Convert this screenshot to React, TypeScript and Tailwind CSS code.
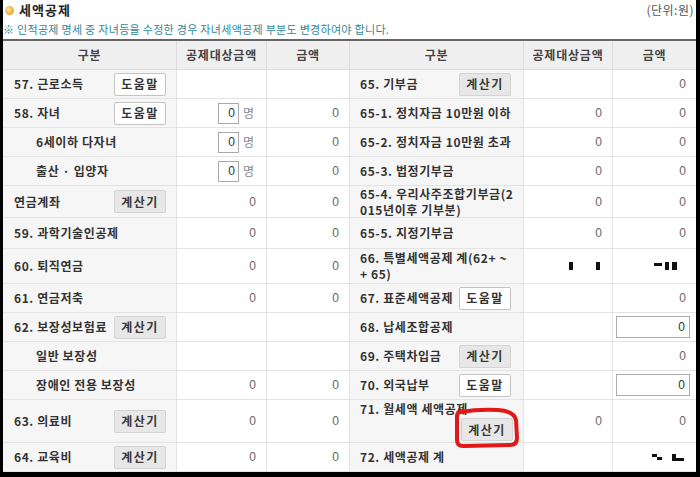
import React from 'react';

type BtnKind = 'help' | 'calc';

function Btn({ kind }: { kind: BtnKind }) {
  const help = kind === 'help';
  return (
    <span
      className={`inline-flex shrink-0 items-center justify-center w-[52px] h-[23px] rounded-[2px] border text-[12px] font-bold tracking-[1.5px] ${
        help ? 'bg-white border-[#c3c3c3] text-[#333]' : 'bg-[#e7e7e7] border-[#d4d4d4] text-[#3a3a3a]'
      }`}
    >
      {help ? '도움말' : '계산기'}
    </span>
  );
}

function L({
  children,
  btn,
  side = 'l',
  indent = false,
}: {
  children: React.ReactNode;
  btn?: BtnKind;
  side?: 'l' | 'r';
  indent?: boolean;
}) {
  const pad = side === 'l' ? (indent ? 'pl-[33px] pr-[10px]' : 'pl-[11px] pr-[10px]') : 'pl-[10px] pr-[12px]';
  return (
    <div
      className={`flex items-center justify-between border-b border-r border-[#e3e3e3] bg-[#f6f6f6] text-[12px] font-bold text-[#333] leading-[16px] tracking-[0.6px] ${pad}`}
    >
      <span className="whitespace-nowrap">{children}</span>
      {btn && <Btn kind={btn} />}
    </div>
  );
}

function V({ children, last = false }: { children?: React.ReactNode; last?: boolean }) {
  return (
    <div
      className={`flex items-center justify-end border-b border-[#e3e3e3] bg-white text-[12px] text-[#666] font-['Liberation_Sans',sans-serif] ${
        last ? '' : 'border-r'
      }`}
    >
      {children}
    </div>
  );
}

function Zero() {
  return <span className="pr-[10px]">0</span>;
}

function Count() {
  return (
    <div className="flex items-center gap-[4px] pr-[12px]">
      <span className="flex w-[21px] h-[21px] items-center justify-end border border-[#a9a9a9] bg-white pr-[3px] text-[12px] text-[#333]">
        0
      </span>
      <span className="text-[12px] text-[#888] font-['Noto_Sans_CJK_KR',sans-serif]">명</span>
    </div>
  );
}

function BoxInput() {
  return (
    <div className="pr-[6px]">
      <span className="flex w-[74px] h-[22px] items-center justify-end border border-[#ababab] bg-white pr-[4px] text-[12px] text-[#333]">
        0
      </span>
    </div>
  );
}

function H({ children, last = false }: { children: React.ReactNode; last?: boolean }) {
  return (
    <div
      className={`flex items-center justify-center border-b border-[#dcdcdc] bg-[#efefef] text-[12px] font-bold text-[#444] tracking-[0.8px] ${
        last ? '' : 'border-r'
      }`}
    >
      {children}
    </div>
  );
}

export default function App() {
  return (
    <div className="w-[700px] h-[477px] overflow-hidden bg-white border-l-[3px] border-r-[4px] border-b-[5px] border-black font-['Noto_Sans_CJK_KR','Noto_Sans',sans-serif]">
      <div className="flex h-[20px] items-center justify-between pl-[2px] pr-[2px]">
        <div className="flex items-center gap-[5px]">
          <span className="w-[9px] h-[9px] rounded-full bg-[radial-gradient(circle_at_40%_40%,#fde6a8_0%,#f2b13f_55%,#d98a1c_100%)]" />
          <span className="text-[13px] font-bold text-[#222] tracking-[1px]">세액공제</span>
        </div>
        <span className="text-[12px] text-[#555] tracking-[0.5px]">(단위:원)</span>
      </div>
      <div className="flex h-[19px] items-center whitespace-nowrap text-[11px] text-[#2f8796] tracking-[0.3px]">
        ※ 인적공제 명세 중 자녀등을 수정한 경우 자녀세액공제 부분도 변경하여야 합니다.
      </div>
      <div className="grid grid-cols-[174px_90px_83px_174px_89px_83px] grid-rows-[29px_29px_29px_29px_29px_32px_31px_35px_29px_29px_29px_29px_43px_29px] border-t-2 border-[#666]">
        <H>구분</H>
        <H>공제대상금액</H>
        <H>금액</H>
        <H>구분</H>
        <H>공제대상금액</H>
        <H last>금액</H>

        <L btn="help">57. 근로소득</L>
        <V />
        <V />
        <L side="r" btn="calc">65. 기부금</L>
        <V />
        <V last><Zero /></V>

        <L btn="help">58. 자녀</L>
        <V><Count /></V>
        <V><Zero /></V>
        <L side="r">65-1. 정치자금 10만원 이하</L>
        <V><Zero /></V>
        <V last><Zero /></V>

        <L indent>6세이하 다자녀</L>
        <V><Count /></V>
        <V><Zero /></V>
        <L side="r">65-2. 정치자금 10만원 초과</L>
        <V><Zero /></V>
        <V last><Zero /></V>

        <L indent>출산 · 입양자</L>
        <V><Count /></V>
        <V><Zero /></V>
        <L side="r">65-3. 법정기부금</L>
        <V><Zero /></V>
        <V last><Zero /></V>

        <L btn="calc">연금계좌</L>
        <V><Zero /></V>
        <V><Zero /></V>
        <L side="r">
          65-4. 우리사주조합기부금(2
          <br />
          015년이후 기부분)
        </L>
        <V><Zero /></V>
        <V last><Zero /></V>

        <L>59. 과학기술인공제</L>
        <V><Zero /></V>
        <V><Zero /></V>
        <L side="r">65-5. 지정기부금</L>
        <V><Zero /></V>
        <V last><Zero /></V>

        <L>60. 퇴직연금</L>
        <V><Zero /></V>
        <V><Zero /></V>
        <L side="r">
          66. 특별세액공제 계(62+ ~
          <br />+ 65)
        </L>
        <V>
          <div className="flex items-center gap-[23px] pr-[12px]">
            <span className="w-[4px] h-[8px] bg-[#111]" />
            <span className="w-[4px] h-[8px] bg-[#111]" />
          </div>
        </V>
        <V last>
          <div className="flex items-start gap-[3px] pr-[19px]">
            <span className="mt-[1px] w-[8px] h-[3px] bg-[#111]" />
            <span className="w-[4px] h-[8px] bg-[#111]" />
            <span className="w-[5px] h-[8px] bg-[#111]" />
          </div>
        </V>

        <L>61. 연금저축</L>
        <V><Zero /></V>
        <V><Zero /></V>
        <L side="r" btn="help">67. 표준세액공제</L>
        <V />
        <V last><Zero /></V>

        <L btn="calc">62. 보장성보험료</L>
        <V />
        <V />
        <L side="r">68. 납세조합공제</L>
        <V />
        <V last><BoxInput /></V>

        <L indent>일반 보장성</L>
        <V />
        <V />
        <L side="r" btn="calc">69. 주택차입금</L>
        <V />
        <V last><Zero /></V>

        <L indent>장애인 전용 보장성</L>
        <V><Zero /></V>
        <V><Zero /></V>
        <L side="r" btn="help">70. 외국납부</L>
        <V />
        <V last><BoxInput /></V>

        <L btn="calc">63. 의료비</L>
        <V><Zero /></V>
        <V><Zero /></V>
        <div className="relative flex flex-col border-b border-r border-[#e3e3e3] bg-[#f6f6f6] pl-[10px] pr-[10px] pt-[2px] text-[12px] font-bold text-[#333] leading-[14px] tracking-[0.6px]">
          <span className="whitespace-nowrap">71. 월세액 세액공제</span>
          <div className="mt-[2px] flex justify-end">
            <Btn kind="calc" />
          </div>
          <svg
            className="absolute left-[104px] top-[6px] z-10 overflow-visible"
            width="66"
            height="44"
            viewBox="0 0 66 44"
            fill="none"
          >
            <path
              d="M7 6 Q24 3 44 4 Q60 5 62 14 L63 32 Q63 39 56 39 L9 40 Q3 40 3 34 L3 11 Q3 5 9 5"
              stroke="#e01818"
              strokeWidth="4"
              strokeLinecap="round"
              strokeLinejoin="round"
            />
          </svg>
        </div>
        <V><Zero /></V>
        <V last><Zero /></V>

        <L btn="calc">64. 교육비</L>
        <V><Zero /></V>
        <V><Zero /></V>
        <L side="r">72. 세액공제 계</L>
        <V />
        <V last>
          <svg className="mr-[12px]" width="32" height="7" viewBox="0 0 32 7" fill="#111">
            <rect x="0" y="0" width="5" height="3" />
            <rect x="5" y="3" width="5" height="3" />
            <rect x="20" y="0" width="4" height="7" />
            <rect x="20" y="4" width="12" height="3" />
          </svg>
        </V>
      </div>
    </div>
  );
}
